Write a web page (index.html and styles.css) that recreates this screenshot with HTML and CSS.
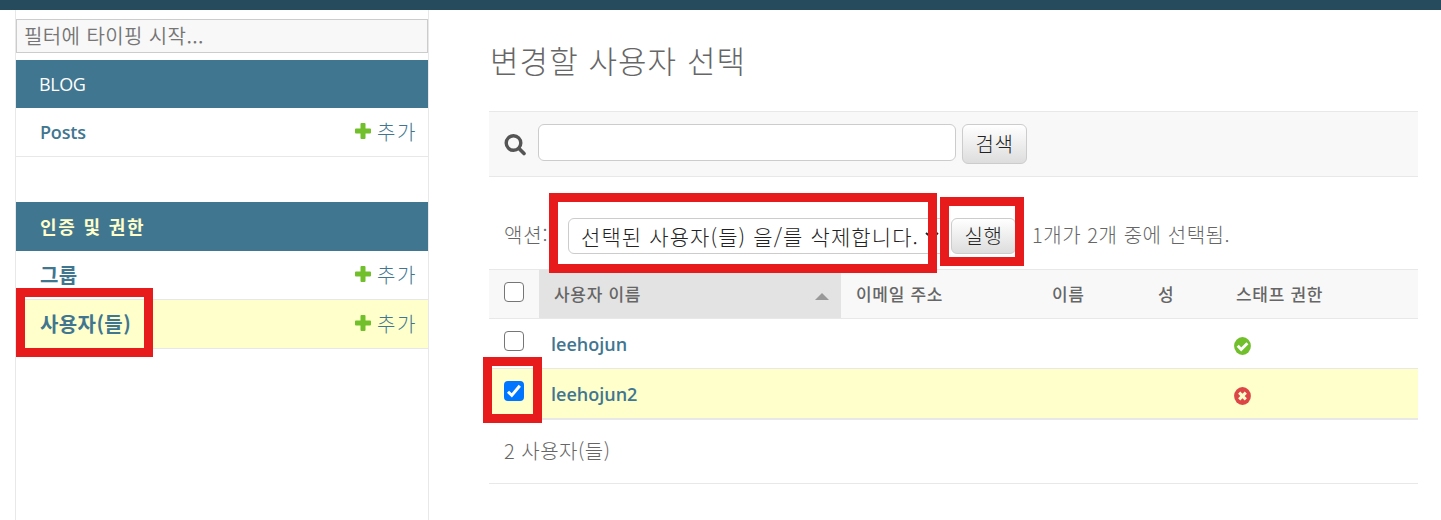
FILE: index.html
```html
<!DOCTYPE html>
<html lang="ko">
<head>
<meta charset="utf-8">
<title>변경할 사용자 선택</title>
<link rel="stylesheet" href="styles.css">
</head>
<body>
<svg class="defs" width="0" height="0">
  <symbol id="plus" viewBox="0 0 16 16"><path fill="#70bf2b" d="M6.500 0h3q1 0 1 1v4.500H15q1 0 1 1v3q0 1-1 1h-4.500V15q0 1-1 1h-3q-1 0-1-1v-4.500H1q-1 0-1-1v-3q0-1 1-1h4.500V1q0-1 1-1z"/></symbol>
</svg>
<div class="topbar"></div>
<div class="layout">
  <nav class="sidebar">
    <div class="filter">필터에 타이핑 시작...</div>
    <section class="module blog">
      <h2 class="caption latin">BLOG</h2>
      <div class="model"><a class="name latin posts">Posts</a><a class="add"><svg width="16" height="16"><use href="#plus"/></svg><span>추가</span></a></div>
    </section>
    <section class="module auth">
      <h2 class="caption current">인증 및 권한</h2>
      <div class="model group"><a class="name">그룹</a><a class="add"><svg width="16" height="16"><use href="#plus"/></svg><span>추가</span></a></div>
      <div class="model selected"><a class="name users">사용자(들)</a><a class="add"><svg width="16" height="16"><use href="#plus"/></svg><span>추가</span></a></div>
    </section>
  </nav>
  <main class="content">
    <h1>변경할 사용자 선택</h1>
    <div class="search">
      <svg class="glass" width="22" height="22" viewBox="0 0 22 22" fill="none" stroke="#555"><circle cx="9.500" cy="9" r="7.300" stroke-width="3.400"/><path d="M15 14.500l5 5" stroke-width="3.600" stroke-linecap="round"/></svg>
      <div class="input"></div>
      <div class="button find">검색</div>
    </div>
    <div class="actions">
      <span class="label">액션:</span>
      <div class="select"><span>선택된 사용자(들) 을/를 삭제합니다.</span><svg width="14" height="8" viewBox="0 0 14 8" fill="none" stroke="#222" stroke-width="2"><path d="M1 1l6 5 6-5"/></svg></div>
      <div class="button run">실행</div>
      <span class="counter">1개가 2개 중에 선택됨.</span>
    </div>
    <div class="table">
      <div class="row head">
        <div class="cell check"><i class="box"></i></div>
        <div class="cell sorted"><span>사용자 이름</span><i class="arrow"></i></div>
        <div class="cell">이메일 주소</div>
        <div class="cell">이름</div>
        <div class="cell">성</div>
        <div class="cell">스태프 권한</div>
      </div>
      <div class="row">
        <div class="cell check"><i class="box"></i></div>
        <div class="cell user latin">leehojun</div>
        <div class="cell"></div><div class="cell"></div><div class="cell"></div>
        <div class="cell status"><svg width="17" height="18" viewBox="0 0 17 18"><ellipse cx="8.500" cy="9" rx="8.400" ry="8.900" fill="#70bf2b"/><path d="M3.700 8.800l3.500 3.700 6.200-6.300" fill="none" stroke="#fff" stroke-width="2.900"/></svg></div>
      </div>
      <div class="row picked">
        <div class="cell check"><i class="box on"><svg width="20" height="20" viewBox="0 0 20 20"><path d="M4 10.700l3.800 3.700L15.800 4.700" fill="none" stroke="#fff" stroke-width="3"/></svg></i></div>
        <div class="cell user latin">leehojun2</div>
        <div class="cell"></div><div class="cell"></div><div class="cell"></div>
        <div class="cell status"><svg width="17" height="18" viewBox="0 0 17 18"><ellipse cx="8.500" cy="9" rx="8.400" ry="8.900" fill="#dd4646"/><path d="M5.200 5.600l6.600 6.800m0-6.800l-6.600 6.800" fill="none" stroke="#ffc" stroke-width="3"/></svg></div>
      </div>
    </div>
    <div class="paginator">2 사용자(들)</div>
  </main>
</div>
<div class="mark mark-user"></div>
<div class="mark mark-select"></div>
<div class="mark mark-run"></div>
<div class="mark mark-check"></div>
</body>
</html>
```
FILE: styles.css
```css
* { box-sizing: border-box; }
body {
  margin: 0;
  height: 520px;
  overflow: hidden;
  position: relative;
  background: #fff;
  color: #666;
  font: 300 20px/24px "Noto Sans CJK KR", sans-serif;
  white-space: nowrap;
}
.defs { position: absolute; }
.latin { font-family: "Open Sans", "Noto Sans CJK KR", sans-serif; }
.topbar { height: 10px; background: #264b5d; }
.layout { display: flex; height: 510px; }

.sidebar {
  width: 414px;
  margin-left: 15px;
  padding-top: 9px;
  border: solid #e8e8e8;
  border-width: 0 1px;
}
.filter {
  height: 34px;
  padding: 4px 7px;
  border: 1px solid #ccc;
  background: #f8f8f8;
  color: #757575;
  font-weight: 350;
  letter-spacing: 0.4px;
}
.module { margin: 7px 0 45px; }
.caption {
  display: flex;
  align-items: center;
  height: 48px;
  margin: 0;
  padding: 0 23px 1px;
  background: #417690;
  color: #fff;
  font-size: 18px;
  font-weight: 400;
  letter-spacing: -0.4px;
}
.current { height: 49px; padding: 0 24px 2px; color: #ffc; font-weight: 700; letter-spacing: 1.8px; }
.model {
  display: flex;
  justify-content: space-between;
  align-items: center;
  height: 49px;
  padding: 0 11px 0 24px;
  border-bottom: 1px solid #e8e8e8;
  color: #417690;
}
.name { font-size: 20px; font-weight: 700; letter-spacing: 0.4px; }
.posts { font-size: 18px; font-weight: 600; letter-spacing: -0.2px; }
.selected { background: #ffc; }
.add { display: flex; align-items: center; gap: 6px; letter-spacing: 1.6px; }
.add svg { margin-bottom: 2px; }

.content { width: 929px; margin-left: 60px; }
h1 {
  height: 101px;
  margin: 0;
  padding: 30px 0 0 1px;
  font-size: 31px;
  line-height: 40px;
  font-weight: 300;
  letter-spacing: 1.05px;
}
.search {
  display: flex;
  align-items: flex-start;
  height: 66px;
  padding: 12px 15px;
  border: solid #e8e8e8;
  border-width: 1px 0;
  background: #f8f8f8;
}
.glass { margin: 10px 12px 0 0; }
.input { width: 418px; height: 37px; border: 1px solid #ccc; border-radius: 6px; background: #fff; }
.button {
  display: flex;
  justify-content: center;
  align-items: center;
  width: 65px;
  height: 40px;
  border: 1px solid #ccc;
  border-radius: 6px;
  background: linear-gradient(#fff, #ddd);
  color: #222;
  letter-spacing: 0.5px;
}
.find { margin-left: 6px; }
.actions { display: flex; align-items: center; height: 92px; padding: 26px 0 0 15px; }
.label { width: 64px; margin-top: -3px; letter-spacing: 0.8px; }
.select {
  display: flex;
  align-items: center;
  justify-content: space-between;
  width: 378px;
  height: 36px;
  padding: 0 6px 0 12px;
  border: 1px solid #ccc;
  border-radius: 6px;
  color: #222;
  font-size: 21px;
  letter-spacing: 1.1px;
}
.run { height: 36px; margin-left: 5px; }
.counter { margin: -3px 0 0 16px; letter-spacing: 0.55px; }

.row {
  display: grid;
  grid-template-columns: 50px 302px 196px 106px 78px 197px;
  height: 50px;
  border-bottom: 1px solid #e8e8e8;
}
.cell { display: flex; align-items: center; padding-left: 15px; }
.head { border-top: 1px solid #e8e8e8; background: #f8f8f8; font-size: 17px; font-weight: 500; letter-spacing: 0.7px; }
.sorted { justify-content: space-between; padding-right: 12px; background: #e3e3e3; }
.arrow { margin-top: 5px; border: solid transparent; border-width: 0 7px 7px; border-bottom-color: #999; }
.check { align-items: flex-start; padding-top: 12px; }
.box { width: 20px; height: 20px; border: 1.5px solid #767676; border-radius: 4px; background: #fff; }
.on { border: 0; background: #0075ff; }
.on svg { display: block; }
.user { padding-left: 12px; color: #417690; font-size: 18px; font-weight: 600; }
.status { padding: 5px 0 0 13px; }
.picked { height: 51px; border-bottom-width: 2px; background: #ffc; }
.paginator { display: flex; align-items: center; height: 64px; padding: 0 0 2px 15px; border-bottom: 1px solid #e8e8e8; letter-spacing: 0.5px; }

/* Red annotation frames laid over the page */
.mark { position: absolute; border: 9px solid #e71b1b; }
.mark-user { left: 16px; top: 288px; width: 137px; height: 69px; }
.mark-select { left: 549px; top: 193px; width: 388px; height: 80px; }
.mark-run { left: 940px; top: 197px; width: 84px; height: 69px; }
.mark-check { left: 483px; top: 357px; width: 59px; height: 66px; }
```
